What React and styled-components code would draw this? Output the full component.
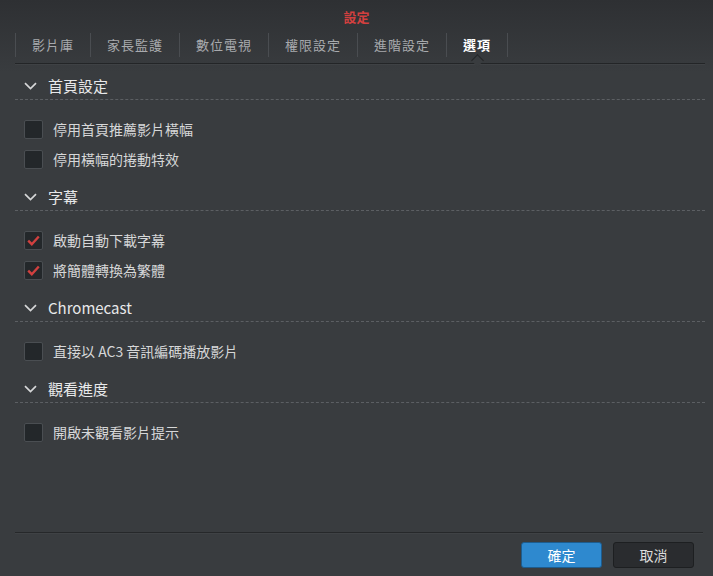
import React, { useState } from 'react';
import styled, { createGlobalStyle } from 'styled-components';

const GlobalStyle = createGlobalStyle`
  html, body {
    margin: 0;
    padding: 0;
    background: #393c3f;
  }
  * {
    box-sizing: border-box;
  }
`;

const Window = styled.div`
  width: 713px;
  height: 576px;
  display: flex;
  flex-direction: column;
  background: linear-gradient(#2e3033 0, #393c3f 72px);
  font-family: 'Noto Sans CJK TC', 'Noto Sans', sans-serif;
  color: #d4d5d6;
  overflow: hidden;
`;

const Title = styled.div`
  height: 33px;
  line-height: 33px;
  text-align: center;
  font-size: 13px;
  font-weight: 700;
  color: #d2403f;
`;

const TabBar = styled.div`
  position: relative;
  height: 31px;
  margin: 0 8px 0 15px;
  display: flex;
  align-items: flex-start;
  border-bottom: 1px solid #232527;
  box-shadow: 0 1px 0 rgba(255, 255, 255, 0.04);
`;

const Tab = styled.div`
  position: relative;
  height: 24px;
  line-height: 24px;
  padding: 0 16px;
  font-size: 13px;
  letter-spacing: 1px;
  white-space: nowrap;
  border-left: 1px solid #4a4d51;
  color: ${({ active }) => (active ? '#ffffff' : '#a8aaad')};
  font-weight: ${({ active }) => (active ? 700 : 400)};
  cursor: pointer;

  &:last-child {
    border-right: 1px solid #4a4d51;
  }

  ${({ active }) =>
    active &&
    `
    &:after {
      content: '';
      position: absolute;
      left: 50%;
      bottom: -8px;
      width: 8px;
      height: 8px;
      margin-left: -4px;
      background: #393c3f;
      border-top: 1px solid #232527;
      border-left: 1px solid #232527;
      transform: rotate(45deg);
    }
  `}
`;

const Body = styled.div`
  flex: 1;
  margin: 0 8px 0 15px;
  padding-top: 11px;
`;

const Section = styled.section`
  margin-bottom: 12px;
`;

const SectionHeader = styled.div`
  height: 25px;
  display: flex;
  align-items: center;
  padding: 0 0 3px 9px;
  border-bottom: 1px dashed #5c5f63;
  font-size: 15px;
  color: #e8e9ea;
  cursor: pointer;

  svg {
    margin-right: 11px;
  }
`;

const Rows = styled.div`
  padding-top: 14px;
`;

const Row = styled.label`
  height: 30px;
  display: flex;
  align-items: center;
  padding-left: 9px;
  font-size: 14px;
  color: #d6d7d8;
  cursor: pointer;
`;

const Box = styled.span`
  width: 19px;
  height: 19px;
  margin-right: 10px;
  display: flex;
  align-items: center;
  justify-content: center;
  border: 1px solid #4a4e52;
  border-radius: 2px;
  background: #23272a;
`;

const Footer = styled.div`
  margin: 0 10px 0 15px;
  padding: 9px 9px 8px 0;
  display: flex;
  justify-content: flex-end;
  gap: 11px;
  border-top: 1px solid #26282a;
  box-shadow: inset 0 1px 0 rgba(255, 255, 255, 0.03);
`;

const Button = styled.button`
  width: 81px;
  height: 26px;
  border-radius: 3px;
  font-family: inherit;
  font-size: 14px;
  cursor: pointer;
  border: 1px solid ${({ primary }) => (primary ? '#1d5c8e' : '#1d1f21')};
  background: ${({ primary }) => (primary ? '#2e89cf' : '#2a2c2f')};
  color: ${({ primary }) => (primary ? '#ffffff' : '#dcdcdc')};
`;

const Chevron = () => (
  <svg width="13" height="8" viewBox="0 0 13 8">
    <path d="M1 1.2 L6.5 6.5 L12 1.2" fill="none" stroke="#d6d7d8" strokeWidth="1.7" />
  </svg>
);

const Check = () => (
  <svg width="13" height="11" viewBox="0 0 13 11">
    <path d="M1.2 5.6 L4.8 9.2 L11.8 1.5" fill="none" stroke="#d0403f" strokeWidth="2.4" />
  </svg>
);

const tabs = ['影片庫', '家長監護', '數位電視', '權限設定', '進階設定', '選項'];

const sections = [
  {
    title: '首頁設定',
    items: [
      { label: '停用首頁推薦影片橫幅', checked: false },
      { label: '停用橫幅的捲動特效', checked: false },
    ],
  },
  {
    title: '字幕',
    items: [
      { label: '啟動自動下載字幕', checked: true },
      { label: '將簡體轉換為繁體', checked: true },
    ],
  },
  {
    title: 'Chromecast',
    items: [{ label: '直接以 AC3 音訊編碼播放影片', checked: false }],
  },
  {
    title: '觀看進度',
    items: [{ label: '開啟未觀看影片提示', checked: false }],
  },
];

const App = () => {
  const [active, setActive] = useState(5);

  return (
    <Window>
      <GlobalStyle />
      <Title>設定</Title>
      <TabBar>
        {tabs.map((t, i) => (
          <Tab key={t} active={i === active} onClick={() => setActive(i)}>
            {t}
          </Tab>
        ))}
      </TabBar>
      <Body>
        {sections.map((s) => (
          <Section key={s.title}>
            <SectionHeader>
              <Chevron />
              {s.title}
            </SectionHeader>
            <Rows>
              {s.items.map((item) => (
                <Row key={item.label}>
                  <Box>{item.checked && <Check />}</Box>
                  {item.label}
                </Row>
              ))}
            </Rows>
          </Section>
        ))}
      </Body>
      <Footer>
        <Button primary>確定</Button>
        <Button>取消</Button>
      </Footer>
    </Window>
  );
};

export default App;
